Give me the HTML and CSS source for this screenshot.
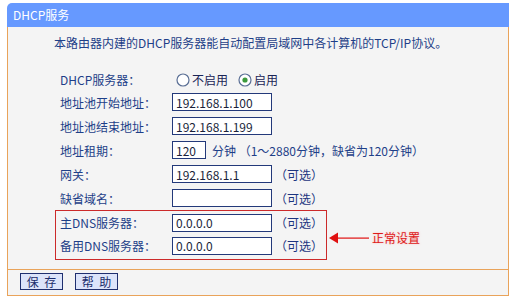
FILE: index.html
```html
<!DOCTYPE html>
<html>
<head>
<meta charset="utf-8">
<link rel="stylesheet" href="styles.css">
</head>
<body>
<div class="panel">
  <div class="header">DHCP服务</div>
  <div class="body">
    <p class="desc">本路由器内建的DHCP服务器能自动配置局域网中各计算机的TCP/IP协议。</p>
    <div class="row row-radio">
      <span class="label">DHCP服务器：</span>
      <span class="radio"><svg class="radio-icon" width="14" height="14" viewBox="0 0 14 14"><circle cx="7" cy="7" r="6" fill="#fff" stroke="#5a6f95" stroke-width="1.2"/></svg>不启用</span>
      <span class="radio radio-on"><svg class="radio-icon" width="14" height="14" viewBox="0 0 14 14"><circle cx="7" cy="7" r="6" fill="#fff" stroke="#5a6f95" stroke-width="1.2"/><circle cx="7" cy="7" r="2.6" fill="#3c9a3c"/></svg>启用</span>
    </div>
    <div class="row"><span class="label">地址池开始地址：</span><input class="field" type="text" value="192.168.1.100"></div>
    <div class="row"><span class="label">地址池结束地址：</span><input class="field" type="text" value="192.168.1.199"></div>
    <div class="row"><span class="label">地址租期：</span><input class="field field-short" type="text" value="120"><span class="hint">分钟 （1～2880分钟，缺省为120分钟）</span></div>
    <div class="row"><span class="label">网关：</span><input class="field" type="text" value="192.168.1.1"><span class="opt">（可选）</span></div>
    <div class="row"><span class="label">缺省域名：</span><input class="field" type="text" value=""><span class="opt">（可选）</span></div>
    <div class="dns-wrap">
      <div class="dns-box">
        <div class="row row-dns"><span class="label">主DNS服务器：</span><input class="field" type="text" value="0.0.0.0"><span class="opt">（可选）</span></div>
        <div class="row row-dns"><span class="label">备用DNS服务器：</span><input class="field" type="text" value="0.0.0.0"><span class="opt">（可选）</span></div>
      </div>
      <div class="note">
        <svg class="arrow" width="40" height="12" viewBox="0 0 40 12"><polygon points="0,6 9,0.5 9,11.5" fill="#e01010"/><rect x="8" y="5.5" width="32" height="1.2" fill="#e01010"/></svg>
        <span class="note-text">正常设置</span>
      </div>
    </div>
  </div>
  <div class="footer">
    <button class="btn" type="button">保 存</button>
    <button class="btn" type="button">帮 助</button>
  </div>
</div>
</body>
</html>
```

FILE: styles.css
```css
html, body {
  margin: 0;
  padding: 0;
  background: #ffffff;
}
body {
  font-family: "Noto Sans CJK SC", "Noto Sans", sans-serif;
  font-size: 12px;
  color: #1e3f88;
}
.panel {
  width: 502px;
  margin: 3px 0 0 7px;
}
.header {
  height: 24px;
  line-height: 24px;
  background: #6699ff;
  color: #ffffff;
  padding-left: 6px;
  border-radius: 5px 0 0 0;
  font-size: 12px;
}
.body {
  background: #f4f4f4;
  border-left: 1px solid #e9a35a;
  border-right: 1px solid #e9a35a;
  padding: 8px 0 9px;
}
.desc {
  margin: 0 0 18px 46px;
  height: 16px;
  line-height: 16px;
  color: #1e3f88;
  white-space: nowrap;
}
.row {
  display: flex;
  align-items: center;
  height: 24px;
  padding-left: 52px;
  white-space: nowrap;
}
.row-radio {
  height: 21px;
}
.label {
  width: 112px;
  flex: none;
  color: #1e3f88;
}
.radio {
  display: flex;
  align-items: center;
  color: #1a2456;
  margin-left: 4px;
  margin-right: 10px;
}
.radio-icon {
  margin-right: 2px;
}
.radio-on {
  margin-left: 0;
}
.field {
  box-sizing: border-box;
  width: 100px;
  height: 18px;
  margin: 0;
  padding: 0 3px;
  border: 1px solid #23397a;
  background: #ffffff;
  font-family: "Noto Sans CJK SC", "Noto Sans", sans-serif;
  font-size: 12px;
  color: #1a1f3a;
  outline: none;
}
.field-short {
  width: 34px;
}
.hint {
  margin-left: 6px;
  color: #1e3f88;
}
.opt {
  margin-left: 3px;
  color: #1c3580;
}
.dns-wrap {
  display: flex;
  align-items: center;
}
.dns-box {
  width: 270px;
  margin-left: 47px;
  border: 1px solid #cc2a2a;
  padding: 0 0 2px;
}
.row-dns {
  height: 23px;
  padding-left: 4px;
}
.note {
  display: flex;
  align-items: center;
  margin: 5px 0 0 2px;
}
.arrow {
  display: block;
}
.note-text {
  margin-left: 3px;
  color: #dd1a1a;
  text-shadow: 0 0 2px rgba(255, 120, 120, 0.5);
}
.footer {
  background: #f4f4f4;
  border: 1px solid #e9a35a;
  height: 25px;
  padding: 3px 0 0 12px;
  box-sizing: border-box;
  height: 27px;
  display: flex;
  align-items: flex-start;
  gap: 12px;
}
.btn {
  box-sizing: border-box;
  width: 43px;
  height: 17px;
  margin: 0;
  padding: 0;
  border: 1px solid #1f2f6f;
  background: #dce4fa;
  color: #1a2c6b;
  font-family: "Noto Sans CJK SC", "Noto Sans", sans-serif;
  font-size: 12px;
  line-height: 15px;
  word-spacing: 3px;
}
```
